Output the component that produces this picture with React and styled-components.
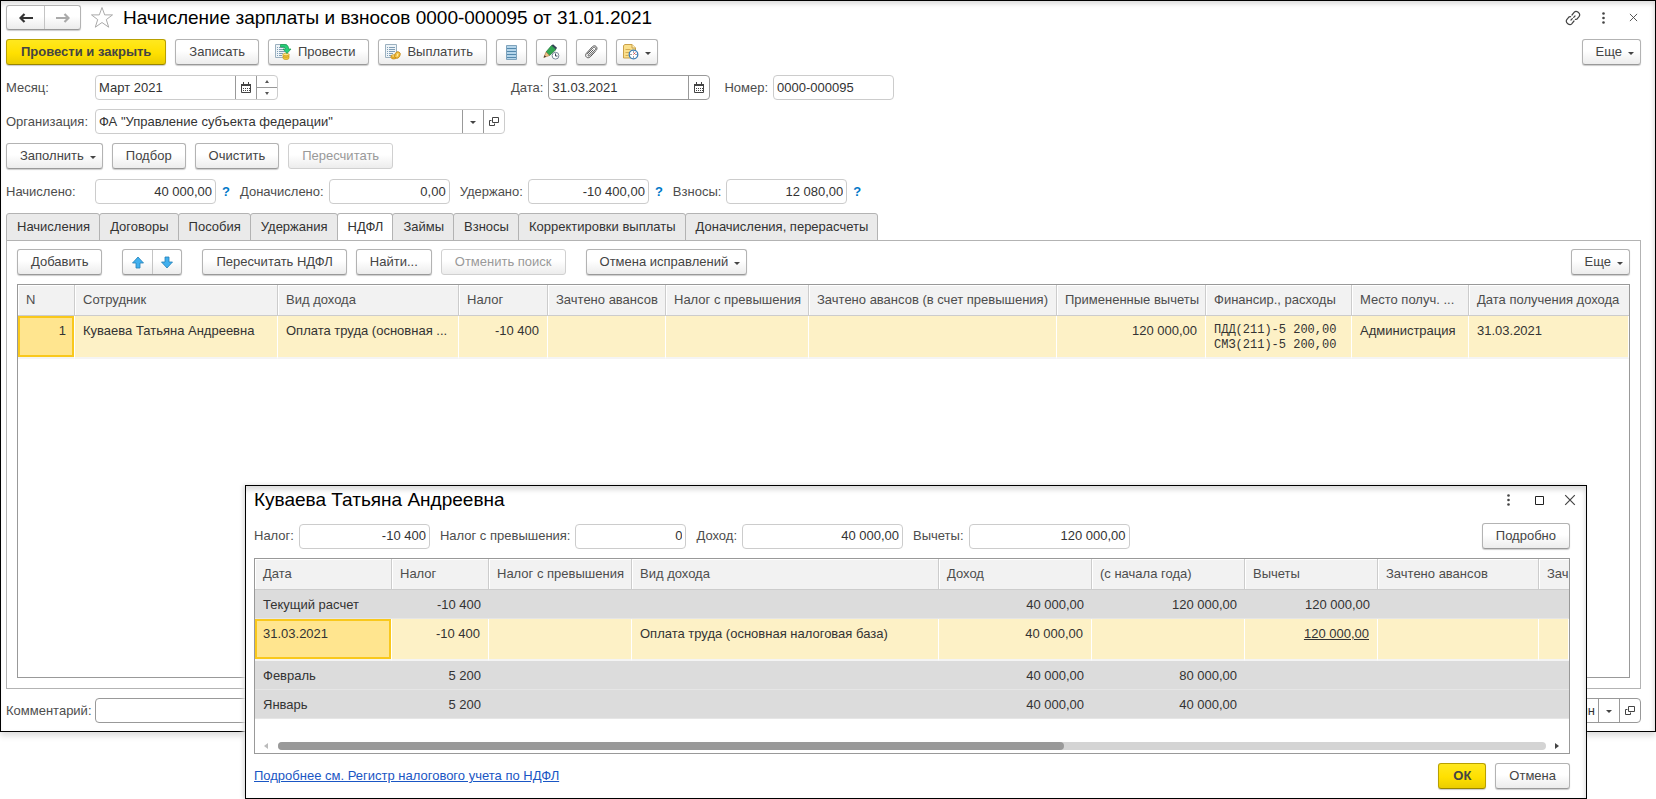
import React, { useId, useState } from 'react';
import styled, { createGlobalStyle, css } from 'styled-components';

const GlobalStyle = createGlobalStyle`
  * {
    box-sizing: border-box;
  }

  body {
    margin: 0;
    background: #fff;
    color: #333;
    font: 13px/16px "Liberation Sans", Arial, sans-serif;
  }

  button, input {
    margin: 0;
    font: inherit;
    color: inherit;
  }
`;

const Page = styled.div`
  position: relative;
  min-height: 799px;
`;

const Window = styled.main`
  display: flex;
  flex-direction: column;
  min-height: 732px;
  padding: 4px 14px 8px 5px;
  border: 1px solid #000;
  background: #fff;
  box-shadow: inset 0 5px 5px -2px #ddd, inset -4px 0 5px -3px #ddd, 0 4px 6px #ddd;
`;

const Row = styled.div`
  display: flex;
  align-items: center;
  gap: ${(p) => p.$gap || 9}px;
  margin-top: ${(p) => p.$top || 0}px;
`;

const DialogHeader = styled(Row)`
  margin-right: -8px;
`;

const Spacer = styled.div`
  flex: 1;
`;

const DateGap = styled.div`
  width: 205px;
`;

const PanelGap = styled.div`
  width: 2px;
`;

const Title = styled.h1`
  margin: 0;
  color: #000;
  font-size: 19px;
  font-weight: normal;
  line-height: 24px;
  white-space: nowrap;
`;

const buttonLook = css`
  border: 1px solid #b3b3b3;
  border-bottom-color: #999;
  border-radius: 3px;
  background: linear-gradient(#fff 45%, #ececec);
  box-shadow: 0 1px 1px #ccc;
`;

const Button = styled.button`
  ${buttonLook}
  display: inline-flex;
  align-items: center;
  justify-content: center;
  gap: 6px;
  height: 26px;
  padding: 0 13px;
  color: #444;
  white-space: nowrap;

  ${(p) => p.$icon && css`
    min-width: 31px;
    padding: 0 6px;
  `}

  ${(p) => p.$withIcon && css`
    padding-left: 6px;
  `}

  ${(p) => p.$menu && css`
    padding-right: 6px;
  `}

  ${(p) => p.$primary && css`
    padding: 0 14px;
    border-color: #b8a000;
    border-bottom-color: #998500;
    background: linear-gradient(#ffe81f, #ffe000 55%, #ebcd00);
    font-weight: bold;
  `}

  &:disabled {
    border-color: #d0d0d0;
    box-shadow: none;
    color: #999;
  }
`;

const ButtonPair = styled.div`
  ${buttonLook}
  display: flex;
  height: ${(p) => p.$height}px;
`;

const PairButton = styled.button`
  display: flex;
  align-items: center;
  justify-content: center;
  width: ${(p) => p.$width}px;
  padding: 0;
  border: 0;
  background: none;

  & + & {
    border-left: 1px solid #c4c4c4;
  }
`;

const PlainButton = styled.button`
  display: flex;
  align-items: center;
  justify-content: center;
  width: 16px;
  height: 24px;
  padding: 0;
  border: 0;
  background: none;
  color: #444;
`;

const FieldBox = styled.div`
  display: flex;
  align-items: center;
  gap: ${(p) => p.$gap}px;
  flex: ${(p) => (p.$grow ? 1 : 'none')};
`;

const Label = styled.label`
  min-width: ${(p) => p.$width || 0}px;
  color: #4d4d4d;
  white-space: nowrap;
`;

const InputFrame = styled.div`
  display: flex;
  overflow: hidden;
  width: ${(p) => (p.$grow ? 'auto' : `${p.$width}px`)};
  flex: ${(p) => (p.$grow ? 1 : 'none')};
  height: 25px;
  border: 1px solid ${(p) => (p.$dark ? '#999' : '#ccc')};
  border-radius: 4px;
  background: #fff;
`;

const Input = styled.input`
  flex: 1;
  min-width: 0;
  padding: 0 3px;
  border: 0;
  outline: 0;
  background: none;
  text-align: ${(p) => p.$align || 'left'};
`;

const InputButton = styled.button`
  display: flex;
  align-items: center;
  justify-content: center;
  width: 21px;
  padding: 0;
  border: 0;
  border-left: 1px solid #999;
  background: none;
`;

const Spin = styled.div`
  display: flex;
  flex-direction: column;
  width: 21px;
  border-left: 1px solid #999;
`;

const SpinButton = styled.button`
  display: flex;
  flex: 1;
  align-items: center;
  justify-content: center;
  padding: 0;
  border: 0;
  background: none;

  & + & {
    border-top: 1px solid #999;
  }
`;

const Help = styled.button`
  padding: 0;
  border: 0;
  background: none;
  color: #0078c8;
  font-weight: bold;
`;

const Tabs = styled.div`
  display: flex;
  margin-top: 9px;
`;

const Tab = styled.button`
  height: 28px;
  margin: 0 0 -1px -1px;
  padding: 0 9px 0 10px;
  border: 1px solid #b3b3b3;
  border-radius: 3px 3px 0 0;
  background: #eaeaea;
  white-space: nowrap;

  &:first-child {
    margin-left: 0;
  }

  &[aria-selected='true'] {
    border-bottom-color: #fff;
    background: #fff;
  }
`;

const Panel = styled.section`
  display: flex;
  flex: 1;
  flex-direction: column;
  padding: 8px 10px 10px;
  border: 1px solid #b3b3b3;
`;

const TableFrame = styled.div`
  display: flex;
  flex: 1;
  flex-direction: column;
  overflow: hidden;
  margin-top: 9px;
  border: 1px solid #999;
`;

const Table = styled.table`
  width: 100%;
  border-collapse: separate;
  border-spacing: 0;
  table-layout: fixed;
`;

const Th = styled.th`
  width: ${(p) => (p.$width ? `${p.$width}px` : 'auto')};
  height: 31px;
  padding: 0 0 0 8px;
  border-right: 1px solid #ccc;
  border-bottom: 1px solid #ccc;
  background: #f2f2f2;
  box-shadow: inset 1px 1px #fff;
  color: #4d4d4d;
  font-weight: normal;
  text-align: left;
  white-space: nowrap;

  &:last-child {
    border-right: 0;
  }
`;

const Td = styled.td`
  height: ${(p) => (p.$tall ? 42 : 29)}px;
  padding: 7px 8px 4px;
  text-align: ${(p) => (p.$right ? 'right' : 'left')};
  vertical-align: top;
  white-space: nowrap;
`;

const BodyRow = styled.tr`
  ${Td} {
    border-bottom: 1px solid #e6e6e6;
    background: #dcdcdc;
  }

  ${(p) => p.$selected && css`
    ${Td} {
      border-right: 1px solid #fff;
      border-bottom: 2px solid #f4f4f4;
      background: #fdf1c6;
    }

    ${Td}:first-child {
      background: #ffe58f;
      box-shadow: inset 0 0 0 2px #f9c81c;
    }
  `}
`;

const Ledger = styled.div`
  font: 12px/15px "Liberation Mono", "Courier New", monospace;
`;

const CellLink = styled.a`
  color: inherit;
`;

const Dialog = styled.section`
  position: absolute;
  top: 485px;
  right: 69px;
  left: 245px;
  display: flex;
  flex-direction: column;
  height: 314px;
  padding: 2px 16px 9px 8px;
  border: 1px solid #000;
  background: #fff;
  box-shadow: inset 0 7px 5px -3px #ddd, inset -4px 0 5px -3px #ddd, -2px 0 4px #ddd;
`;

const ScrollRow = styled.div`
  display: flex;
  align-items: center;
  gap: 9px;
  margin-top: auto;
  padding: 0 9px 3px;
`;

const Track = styled.div`
  flex: 1;
  height: 8px;
  border-radius: 4px;
  background: #d4d4d4;
`;

const Thumb = styled.div`
  width: 62%;
  height: 8px;
  border-radius: 4px;
  background: #999;
`;

const RegisterLink = styled.a`
  color: #1a56c4;
`;

const Caret = () => (
  <svg width='6' height='7' viewBox='0 0 6 7'><path d='M0 3h6L3 6z' fill='#444' /></svg>
);

const TinyArrow = ({ up }) => (
  <svg width='4' height='3' viewBox='0 0 4 3'><path d={up ? 'M0 3h4L2 0z' : 'M0 0h4L2 3z'} fill='#555' /></svg>
);

const SideArrow = ({ left }) => (
  <svg width='5' height='6' viewBox='0 0 5 6'><path d={left ? 'M4 0v6L0 3z' : 'M0 0v6l4-3z'} fill={left ? '#bbb' : '#444'} /></svg>
);

const NavArrow = ({ forward }) => (
  <svg width='14' height='12' viewBox='0 0 14 12' fill='none' stroke={forward ? '#aaa' : '#333'} strokeWidth='2.2'>
    <path d={forward ? 'M0 6h12M8.500 2l4 4-4 4' : 'M14 6H2M5.500 2l-4 4 4 4'} />
  </svg>
);

const StarIcon = () => (
  <svg width='24' height='23' viewBox='0 0 24 23' fill='#fff' stroke='#aaa'>
    <path d='M12 1.500l2.700 7.400h7.800l-6.200 4.700 2.400 7.600-6.700-4.700-6.700 4.700 2.400-7.600L1.500 8.900h7.800z' />
  </svg>
);

const LinkIcon = () => (
  <svg width='16' height='16' viewBox='0 0 16 16' fill='none' stroke='#444' strokeWidth='1.2' strokeLinecap='round'>
    <path d='M7 5l2.300-2.800c2-2.300 6.800 1.200 4.900 4.200l-2.300 2.700-1.500.2M9 11l-2.300 2.800c-2 2.300-6.800-1.200-4.900-4.200l2.300-2.700 1.500-.2M6 10l1.300-1.300M8.700 7.300L10 6' />
  </svg>
);

const DotsIcon = () => (
  <svg width='3' height='12' viewBox='0 0 3 12' fill='#444'>
    <circle cx='1.5' cy='1.5' r='1.3' />
    <circle cx='1.5' cy='6' r='1.3' />
    <circle cx='1.5' cy='10.5' r='1.3' />
  </svg>
);

const CloseIcon = ({ size }) => (
  <svg width={size} height={size} viewBox='0 0 10 10' stroke='#444'><path d='M1 1l8 8M9 1L1 9' /></svg>
);

const MaximizeIcon = () => (
  <svg width='9' height='9' viewBox='0 0 9 9'><path d='M.5.5h8v8h-8z' fill='none' stroke='#222' /></svg>
);

const CalendarIcon = () => (
  <svg width='10' height='11' viewBox='0 0 10 11' fill='none' stroke='#444'>
    <path d='M.5 2.500h9v8h-9z' />
    <path d='M0 3h10' strokeWidth='2' />
    <path d='M2.500 0v2M7.500 0v2' />
    <path d='M2 6.500h7M2 8.500h7' strokeDasharray='1 1' />
  </svg>
);

const OpenIcon = () => (
  <svg width='10' height='9' viewBox='0 0 10 9' fill='none' stroke='#444'>
    <path d='M3.500.5h6v5h-6zM2.500 3.500h-2v5h5v-2' />
  </svg>
);

const SheetLines = () => (
  <>
    <path d='M.5.5h11v13H.5z' fill='#eef4f8' stroke='#9bb0bf' />
    <path d='M2 3.500h1M2 5.500h1M2 7.500h1M2 9.500h1M2 11.500h1M4 3.500h6M4 5.500h6M4 7.500h6M4 9.500h4M4 11.500h3' stroke='#7f9db5' />
  </>
);

const PostIcon = () => (
  <svg width='17' height='16' viewBox='0 0 17 16'>
    <SheetLines />
    <path d='M8 10.500v3.500c0 2 6 2 6 0v-3.500z' fill='#f0c63c' stroke='#c7981a' strokeWidth='.7' />
    <ellipse cx='11' cy='10.500' rx='3' ry='1.300' fill='#ffe58a' stroke='#c7981a' strokeWidth='.7' />
    <path d='M8 12.300c1 1.300 5 1.300 6 0' fill='none' stroke='#c7981a' strokeWidth='.7' />
    <path d='M5.500.5H9c3.200 0 4.600 1.300 4.600 4.500H16l-4 4.500L8 5h2.500c0-1.500-.8-2-2.300-2H5.500z' fill='#27d07a' stroke='#159a4c' strokeWidth='.7' />
  </svg>
);

const PayIcon = () => (
  <svg width='16' height='16' viewBox='0 0 16 16'>
    <SheetLines />
    <path d='M6 12v1.500c0 2 5.500 2 5.500 0V12z' fill='#f0b52c' stroke='#c08512' strokeWidth='.7' />
    <ellipse cx='8.7' cy='12' rx='2.7' ry='1.2' fill='#ffdf7c' stroke='#c08512' strokeWidth='.7' />
    <ellipse cx='12.4' cy='11' rx='2.6' ry='3.4' transform='rotate(25 12.4 11)' fill='#f4c243' stroke='#c08512' strokeWidth='.8' />
    <path d='M13 9.500l-1 3' stroke='#fff0b4' />
  </svg>
);

const ListIcon = () => (
  <svg width='11' height='15' viewBox='0 0 11 15'>
    <path d='M.5.5h10v14H.5z' fill='#b5d5ea' stroke='#7fa3bc' />
    <path d='M1 3.500h9M1 6.500h9M1 9.500h9M1 12.500h9' stroke='#5489ad' />
  </svg>
);

const PencilIcon = () => (
  <svg width='17' height='16' viewBox='0 0 17 16'>
    <path d='M8.500 1.500l4.500 4-6.500 6-3.500-3.500z' fill='#32a852' stroke='#1d7135' strokeWidth='.7' />
    <path d='M8.500 1.500L10 .3l4 3.500-1 1.700z' fill='#345' />
    <path d='M3 8l3.500 3.500L.8 13.500z' fill='#efc28a' stroke='#a6753b' strokeWidth='.6' />
    <path d='M.8 13.500l.8-2.300 1.500 1.500z' fill='#333' />
    <circle cx='12.5' cy='11.7' r='3.4' fill='#fff' stroke='#789' />
    <path d='M12.500 9.500v2.500h2' fill='none' stroke='#345' />
  </svg>
);

const ClipIcon = () => (
  <svg width='14' height='14' viewBox='0 0 14 14' fill='none' stroke='#555' strokeLinecap='round'>
    <path d='M3.200 9l5.500-6c2-1.800 3.900.2 2.400 2l-5.500 5.800c-1 .9-2-.1-1.200-1l4.800-5M11.300 6.500l-5 5.300c-2.400 2.500-6.300-.4-4-3.400l6-6.600c2.600-2.600 6.400.5 4 3.500' />
  </svg>
);

const ScheduleIcon = () => (
  <svg width='16' height='16' viewBox='0 0 16 16'>
    <path d='M.5 1.500L2 .5h7l3.500 3.500v10H.5z' fill='#fbe08c' stroke='#caa14a' />
    <path d='M9 .5V4h3.500' fill='#fff2c2' stroke='#caa14a' />
    <path d='M2.500 5.500h5M2.500 8.500h4M2.500 11.500h3' stroke='#d5ad53' />
    <circle cx='10.5' cy='10.5' r='4.3' fill='#fff' stroke='#3d7db8' strokeWidth='1.3' />
    <path d='M10.500 7.500v1M10.500 12.500v1M7.500 10.500h1M12.500 10.500h1' stroke='#345' />
    <path d='M10.500 10.500l1.800-2' stroke='#d33' />
  </svg>
);

const BlueArrow = ({ down }) => (
  <svg width='12' height='13' viewBox='0 0 12 13'>
    <path
      d={down ? 'M4 1h4v5h3.500L6 12 .5 6H4z' : 'M6 1l5.500 6H8v5H4V7H.5z'}
      fill='#41b0ee'
      stroke='#2380b8'
      strokeWidth='.8'
    />
  </svg>
);

function Field({ label, labelWidth, value, width, align, dark, grow, children }) {
  const id = useId();
  return (
    <FieldBox $gap={labelWidth ? 1 : 5} $grow={grow}>
      <Label htmlFor={id} $width={labelWidth}>{label}</Label>
      <InputFrame $width={width} $dark={dark} $grow={grow}>
        <Input id={id} defaultValue={value} $align={align} />
        {children}
      </InputFrame>
    </FieldBox>
  );
}

const TABS = [
  'Начисления', 'Договоры', 'Пособия', 'Удержания', 'НДФЛ', 'Займы',
  'Взносы', 'Корректировки выплаты', 'Доначисления, перерасчеты',
];

const TAX_COLUMNS = [
  { text: 'N', width: 57 },
  { text: 'Сотрудник', width: 203 },
  { text: 'Вид дохода', width: 181 },
  { text: 'Налог', width: 89 },
  { text: 'Зачтено авансов', width: 118 },
  { text: 'Налог с превышения', width: 143 },
  { text: 'Зачтено авансов (в счет превышения)', width: 248 },
  { text: 'Примененные вычеты', width: 149 },
  { text: 'Финансир., расходы', width: 146 },
  { text: 'Место получ. ...', width: 117 },
  { text: 'Дата получения дохода' },
];

const DETAIL_COLUMNS = [
  { text: 'Дата', width: 137 },
  { text: 'Налог', width: 97 },
  { text: 'Налог с превышения', width: 143 },
  { text: 'Вид дохода', width: 307 },
  { text: 'Доход', width: 153 },
  { text: '(с начала года)', width: 153 },
  { text: 'Вычеты', width: 133 },
  { text: 'Зачтено авансов', width: 161 },
  { text: 'Зач' },
];

const DETAIL_ROWS = [
  { date: 'Текущий расчет', tax: '-10 400', income: '40 000,00', total: '120 000,00', deduction: '120 000,00' },
  { date: '31.03.2021', tax: '-10 400', kind: 'Оплата труда (основная налоговая база)', income: '40 000,00', deduction: '120 000,00', selected: true },
  { date: 'Февраль', tax: '5 200', income: '40 000,00', total: '80 000,00' },
  { date: 'Январь', tax: '5 200', income: '40 000,00', total: '40 000,00' },
];

function TaxTable() {
  return (
    <TableFrame>
      <Table>
        <thead>
          <tr>
            {TAX_COLUMNS.map(({ text, width }) => <Th key={text} $width={width}>{text}</Th>)}
          </tr>
        </thead>
        <tbody>
          <BodyRow $selected>
            <Td $tall $right>1</Td>
            <Td>Куваева Татьяна Андреевна</Td>
            <Td>Оплата труда (основная ...</Td>
            <Td $right>-10 400</Td>
            <Td />
            <Td />
            <Td />
            <Td $right>120 000,00</Td>
            <Td>
              <Ledger>ПДД(211)-5 200,00</Ledger>
              <Ledger>СМЗ(211)-5 200,00</Ledger>
            </Td>
            <Td>Администрация</Td>
            <Td>31.03.2021</Td>
          </BodyRow>
        </tbody>
      </Table>
    </TableFrame>
  );
}

function DetailTable() {
  return (
    <TableFrame>
      <Table>
        <thead>
          <tr>
            {DETAIL_COLUMNS.map(({ text, width }) => <Th key={text} $width={width}>{text}</Th>)}
          </tr>
        </thead>
        <tbody>
          {DETAIL_ROWS.map((row) => (
            <BodyRow key={row.date} $selected={row.selected}>
              <Td $tall={row.selected}>{row.date}</Td>
              <Td $right>{row.tax}</Td>
              <Td />
              <Td>{row.kind}</Td>
              <Td $right>{row.income}</Td>
              <Td $right>{row.total}</Td>
              <Td $right>
                {row.selected ? <CellLink href='#deduction'>{row.deduction}</CellLink> : row.deduction}
              </Td>
              <Td />
              <Td />
            </BodyRow>
          ))}
        </tbody>
      </Table>
      <ScrollRow>
        <SideArrow left />
        <Track><Thumb /></Track>
        <SideArrow />
      </ScrollRow>
    </TableFrame>
  );
}

function EmployeeDialog() {
  return (
    <Dialog role='dialog' aria-label='Куваева Татьяна Андреевна'>
      <DialogHeader $gap={15}>
        <Title as='h2'>Куваева Татьяна Андреевна</Title>
        <Spacer />
        <PlainButton aria-label='Меню'><DotsIcon /></PlainButton>
        <PlainButton aria-label='Развернуть'><MaximizeIcon /></PlainButton>
        <PlainButton aria-label='Закрыть'><CloseIcon size={12} /></PlainButton>
      </DialogHeader>
      <Row $gap={10} $top={11}>
        <Field label='Налог:' value='-10 400' width={131} align='right' />
        <Field label='Налог с превышения:' value='0' width={111} align='right' />
        <Field label='Доход:' value='40 000,00' width={161} align='right' />
        <Field label='Вычеты:' value='120 000,00' width={161} align='right' />
        <Spacer />
        <Button type='button'>Подробно</Button>
      </Row>
      <DetailTable />
      <Row $top={9}>
        <RegisterLink href='#register'>Подробнее см. Регистр налогового учета по НДФЛ</RegisterLink>
        <Spacer />
        <Button type='button' $primary>ОК</Button>
        <Button type='button'>Отмена</Button>
      </Row>
    </Dialog>
  );
}

export default function App() {
  const [tab, setTab] = useState('НДФЛ');

  return (
    <Page>
      <GlobalStyle />
      <Window>
        <Row>
          <ButtonPair $height={25}>
            <PairButton type='button' $width={37} aria-label='Назад'><NavArrow /></PairButton>
            <PairButton type='button' $width={36} aria-label='Вперед'><NavArrow forward /></PairButton>
          </ButtonPair>
          <StarIcon />
          <Title>Начисление зарплаты и взносов 0000-000095 от 31.01.2021</Title>
          <Spacer />
          <Row $gap={14}>
            <PlainButton aria-label='Ссылка'><LinkIcon /></PlainButton>
            <PlainButton aria-label='Меню'><DotsIcon /></PlainButton>
            <PlainButton aria-label='Закрыть'><CloseIcon size={9} /></PlainButton>
          </Row>
        </Row>

        <Row $top={9}>
          <Button type='button' $primary>Провести и закрыть</Button>
          <Button type='button'>Записать</Button>
          <Button type='button' $withIcon><PostIcon />Провести</Button>
          <Button type='button' $withIcon><PayIcon />Выплатить</Button>
          <Button type='button' $icon aria-label='Реестр'><ListIcon /></Button>
          <Button type='button' $icon aria-label='Изменить'><PencilIcon /></Button>
          <Button type='button' $icon aria-label='Файлы'><ClipIcon /></Button>
          <Button type='button' $icon aria-label='Расписание'><ScheduleIcon /><Caret /></Button>
          <Spacer />
          <Button type='button' $menu>Еще<Caret /></Button>
        </Row>

        <Row $top={10} $gap={14}>
          <Field label='Месяц:' labelWidth={88} value='Март 2021' width={183}>
            <InputButton type='button' aria-label='Выбрать месяц'><CalendarIcon /></InputButton>
            <Spin>
              <SpinButton type='button' aria-label='Больше'><TinyArrow up /></SpinButton>
              <SpinButton type='button' aria-label='Меньше'><TinyArrow /></SpinButton>
            </Spin>
          </Field>
          <DateGap />
          <Field label='Дата:' value='31.03.2021' width={162} dark>
            <InputButton type='button' aria-label='Выбрать дату'><CalendarIcon /></InputButton>
          </Field>
          <Field label='Номер:' value='0000-000095' width={121} />
        </Row>

        <Row $top={9}>
          <Field label='Организация:' labelWidth={88} value='ФА "Управление субъекта федерации"' width={410}>
            <InputButton type='button' aria-label='Выбрать'><Caret /></InputButton>
            <InputButton type='button' aria-label='Открыть'><OpenIcon /></InputButton>
          </Field>
        </Row>

        <Row $top={9}>
          <Button type='button' $menu>Заполнить<Caret /></Button>
          <Button type='button'>Подбор</Button>
          <Button type='button'>Очистить</Button>
          <Button type='button' disabled>Пересчитать</Button>
        </Row>

        <Row $top={10} $gap={10}>
          <FieldBox $gap={6}>
            <Field label='Начислено:' labelWidth={88} value='40 000,00' width={121} align='right' />
            <Help type='button'>?</Help>
          </FieldBox>
          <Field label='Доначислено:' value='0,00' width={121} align='right' />
          <FieldBox $gap={6}>
            <Field label='Удержано:' value='-10 400,00' width={121} align='right' />
            <Help type='button'>?</Help>
          </FieldBox>
          <FieldBox $gap={6}>
            <Field label='Взносы:' value='12 080,00' width={121} align='right' />
            <Help type='button'>?</Help>
          </FieldBox>
        </Row>

        <Tabs role='tablist'>
          {TABS.map((name) => (
            <Tab key={name} type='button' role='tab' aria-selected={name === tab} onClick={() => setTab(name)}>
              {name}
            </Tab>
          ))}
        </Tabs>
        <Panel role='tabpanel' aria-label={tab}>
          <Row>
            <Button type='button'>Добавить</Button>
            <PanelGap />
            <ButtonPair $height={26}>
              <PairButton type='button' $width={29} aria-label='Вверх'><BlueArrow /></PairButton>
              <PairButton type='button' $width={29} aria-label='Вниз'><BlueArrow down /></PairButton>
            </ButtonPair>
            <PanelGap />
            <Button type='button'>Пересчитать НДФЛ</Button>
            <Button type='button'>Найти...</Button>
            <Button type='button' disabled>Отменить поиск</Button>
            <PanelGap />
            <Button type='button' $menu>Отмена исправлений<Caret /></Button>
            <Spacer />
            <Button type='button' $menu>Еще<Caret /></Button>
          </Row>
          <TaxTable />
        </Panel>

        <Row $top={9}>
          <Field label='Комментарий:' labelWidth={88} value='' dark grow />
          <Field label='Ответственный:' value='Админ' width={162} align='right' dark>
            <InputButton type='button' aria-label='Выбрать'><Caret /></InputButton>
            <InputButton type='button' aria-label='Открыть'><OpenIcon /></InputButton>
          </Field>
        </Row>
      </Window>
      <EmployeeDialog />
    </Page>
  );
}
